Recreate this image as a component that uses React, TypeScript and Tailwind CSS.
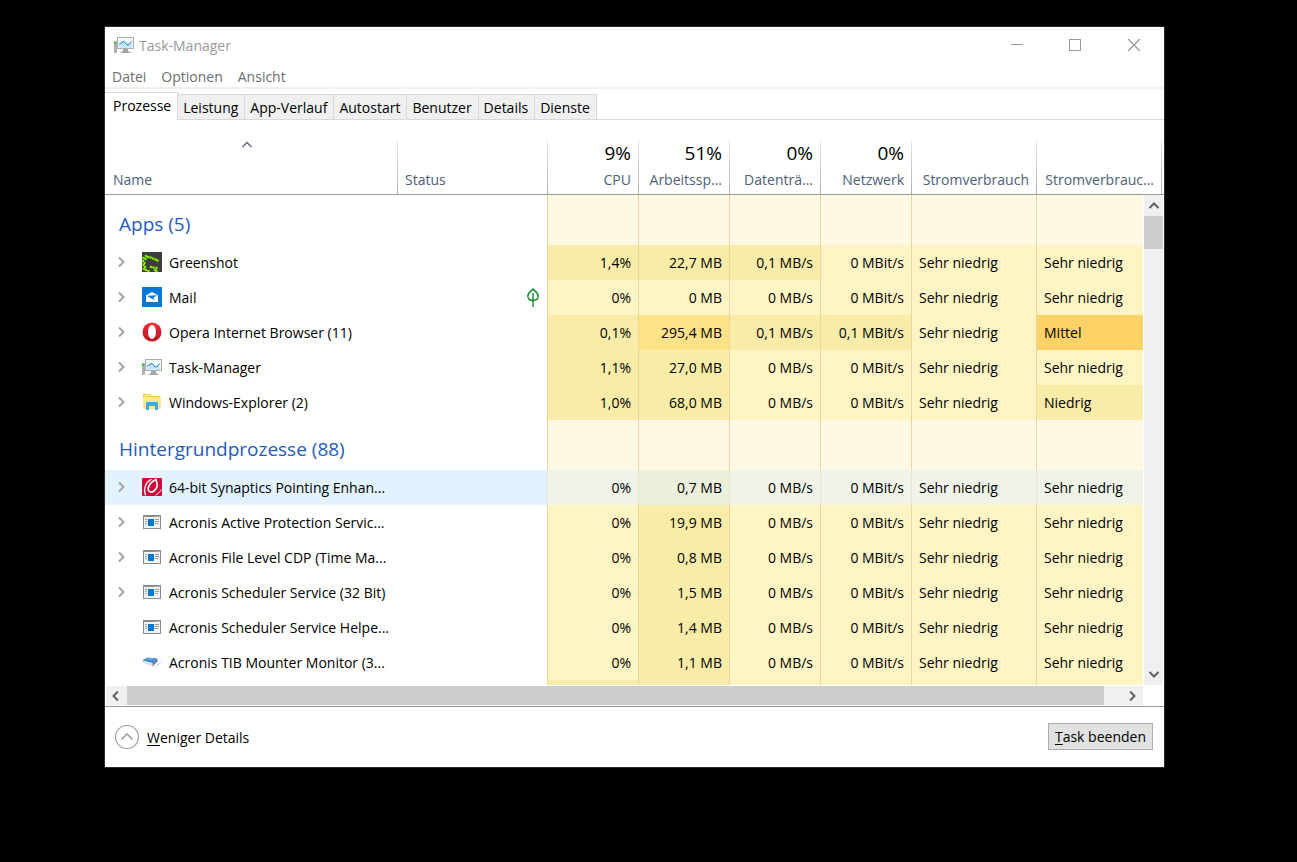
import { useState } from 'react'
import type { ReactNode } from 'react'
import clsx from 'clsx'

type Heat = 'base' | 'low' | 'mid' | 'high'

interface Process {
  name: string
  icon: ReactNode
  values: [string, Heat][]
  power: string
  trend: string
  trendHeat?: Heat
  expandable?: boolean
  leaf?: boolean
}

interface Group {
  title: string
  items: Process[]
}

const heatClass: Record<Heat, string> = {
  base: 'bg-[#fff4c4]',
  low: 'bg-[#f9eca8]',
  mid: 'bg-[#ffe287]',
  high: 'bg-[#ffd267]',
}

const hoverClass: Record<Heat, string> = {
  base: 'bg-[#eff3e8]',
  low: 'bg-[#ecefdb]',
  mid: 'bg-[#ecefdb]',
  high: 'bg-[#ecefdb]',
}

function GreenshotIcon() {
  const dots = [
    [4, 4], [6, 5], [8.5, 5.5], [11, 6.5], [13.5, 7.500], [15.5, 8.5],
    [1.5, 6], [3.5, 7], [1, 9], [2.5, 11], [1.5, 13], [3, 15], [2, 17], [4, 18],
    [9, 15], [11.5, 15.5], [14.5, 16], [13, 18], [6.5, 19], [14.5, 19],
  ]
  return (
    <svg width="20" height="20" viewBox="0 0 20 20">
      <rect width="20" height="20" fill="#3d3d3d" />
      {dots.map(([x, y]) => <circle key={`${x}-${y}`} cx={x} cy={y} r="1.3" fill="#85ee00" />)}
    </svg>
  )
}

function MailIcon() {
  return (
    <svg width="20" height="20" viewBox="0 0 20 20">
      <rect width="20" height="20" fill="#0078d7" />
      <path d="M4 8.2 10 5l6 3.2V15H4z" fill="#fff" />
      <path d="M5 8.8 15 8.2 11.2 11l2 2.3L9.6 11.4z" fill="#0078d7" />
    </svg>
  )
}

function OperaIcon() {
  return (
    <svg width="20" height="20" viewBox="0 0 20 20">
      <defs>
        <linearGradient id="opera" x1="0" y1="0" x2="0" y2="1">
          <stop offset="0" stopColor="#f4303c" />
          <stop offset="1" stopColor="#b8101e" />
        </linearGradient>
      </defs>
      <ellipse cx="10" cy="10" rx="9.5" ry="9.5" fill="url(#opera)" />
      <ellipse cx="10" cy="10" rx="4" ry="7" fill="#fff" />
    </svg>
  )
}

function MonitorIcon() {
  return (
    <svg width="20" height="18" viewBox="0 0 20 18" className="shrink-0">
      <rect x="0" y="5" width="3" height="12" fill="#b0b0b0" />
      <rect x="0" y="6" width="2" height="2" fill="#2fd02f" />
      <path d="M9 13h5v2l3 2H6l3-2z" fill="#a3a3a3" />
      <rect x="3.5" y="1.5" width="16" height="11" fill="#eef8fd" stroke="#aeaeae" />
      <path d="M5 8.5 9 5l4 4 3-3 2.5 2v4H5z" fill="#c9eafa" />
      <path d="M5 8.5 6.5 7 8 7 9.5 5 13 9 14.5 9 17.5 5.5" fill="none" stroke="#1781b8" />
    </svg>
  )
}

function FolderIcon() {
  return (
    <svg width="20" height="20" viewBox="0 0 20 20">
      <path d="M1 2h7l1 2h9v11H1z" fill="#fcc93e" />
      <rect x="3" y="3" width="4" height="1" fill="#fff" />
      <rect x="1" y="5" width="18" height="12" fill="#ffe694" />
      <path d="M4 18v-7l1-1h10l1 1v7h-3v-4H7v4z" fill="#37aee5" />
    </svg>
  )
}

function SynapticsIcon() {
  return (
    <svg width="20" height="18" viewBox="0 0 20 18">
      <rect width="20" height="18" rx="1" fill="#cf0a38" />
      <g fill="none" stroke="#fff" strokeLinecap="round">
        <path d="M14 1.5c1.5 4 1.5 9-2 11.5-3 2-6 1-5.800-2.500C6.500 6.500 10 3.500 14 1.500z" strokeWidth="1.6" />
        <path d="M9 1.5C3.5 4.5 1 11 3.5 17" strokeWidth="1.3" />
        <path d="M14 17c2-1.200 4-3 5-5" />
      </g>
    </svg>
  )
}

function AppWindowIcon() {
  return (
    <svg width="18" height="14" viewBox="0 0 18 14" shapeRendering="crispEdges" className="mx-auto">
      <rect width="18" height="14" fill="#888b8f" />
      <rect x="1" y="2" width="16" height="11" fill="#f4f4f4" />
      <path d="M12 1.5h1M14 1.5h1M16 1.5h1" stroke="#c4c6c8" />
      <rect x="5" y="4" width="6" height="7" fill="#0078d7" />
      <path d="M2 4.5h2M2 6.5h2M2 8.5h2M12 4.5h4M12 6.5h4M12 8.5h3" stroke="#999c9f" />
    </svg>
  )
}

function DriveIcon() {
  return (
    <svg width="20" height="12" viewBox="0 0 20 12">
      <path d="m13 10 6-4.500 1 .500-5.500 4.700z" fill="#d5d8da" />
      <path d="M0 4.2 10.5 7v3.5L1 7z" fill="#dfe5ea" />
      <path d="m10.500 7 5-4.500v3l-5 5z" fill="#5f7f9e" />
      <path d="M0 4.2 6 1.5l9.500 1L10.500 7z" fill="#3c8bcd" />
      <path d="M4 3.5 7 2l6 .8-3 1.500z" fill="#69aee2" />
    </svg>
  )
}

function LeafIcon() {
  return (
    <svg width="12" height="19" viewBox="0 0 12 19" fill="none" stroke="#138a28" strokeWidth="1.4">
      <path d="M6 1C4 3.3.8 5 .8 8c0 3 2 4.500 5.200 4.500s5.200-1.500 5.200-4.500c0-3-3.200-4.700-5.200-7zM6 5v14" />
    </svg>
  )
}

function Chevron({ d, color = '#606060', width = 2 }: { d: string; color?: string; width?: number }) {
  return (
    <svg width="12" height="12" viewBox="0 0 12 12" fill="none" stroke={color} strokeWidth={width}>
      <path d={d} />
    </svg>
  )
}

const UP = 'M1.5 8 6 3.5 10.5 8'
const DOWN = 'M1.5 4 6 8.5 10.5 4'
const LEFT = 'M8 1.5 3.5 6 8 10.5'
const RIGHT = 'M4 1.5 8.5 6 4 10.5'

const SN = 'Sehr niedrig'

function idle(name: string, icon: ReactNode, memory: string, expandable = true): Process {
  return {
    name, icon, expandable, power: SN, trend: SN,
    values: [['0%', 'base'], [memory, 'low'], ['0 MB/s', 'base'], ['0 MBit/s', 'base']],
  }
}

const groups: Group[] = [
  {
    title: 'Apps (5)',
    items: [
      { name: 'Greenshot', icon: <GreenshotIcon />, expandable: true, power: SN, trend: SN, values: [['1,4%', 'low'], ['22,7 MB', 'low'], ['0,1 MB/s', 'low'], ['0 MBit/s', 'base']] },
      { name: 'Mail', icon: <MailIcon />, expandable: true, leaf: true, power: SN, trend: SN, values: [['0%', 'base'], ['0 MB', 'base'], ['0 MB/s', 'base'], ['0 MBit/s', 'base']] },
      { name: 'Opera Internet Browser (11)', icon: <OperaIcon />, expandable: true, power: SN, trend: 'Mittel', trendHeat: 'high', values: [['0,1%', 'low'], ['295,4 MB', 'mid'], ['0,1 MB/s', 'low'], ['0,1 MBit/s', 'low']] },
      { name: 'Task-Manager', icon: <MonitorIcon />, expandable: true, power: SN, trend: SN, values: [['1,1%', 'low'], ['27,0 MB', 'low'], ['0 MB/s', 'base'], ['0 MBit/s', 'base']] },
      { name: 'Windows-Explorer (2)', icon: <FolderIcon />, expandable: true, power: SN, trend: 'Niedrig', trendHeat: 'low', values: [['1,0%', 'low'], ['68,0 MB', 'low'], ['0 MB/s', 'base'], ['0 MBit/s', 'base']] },
    ],
  },
  {
    title: 'Hintergrundprozesse (88)',
    items: [
      idle('64-bit Synaptics Pointing Enhan...', <SynapticsIcon />, '0,7 MB'),
      idle('Acronis Active Protection Servic...', <AppWindowIcon />, '19,9 MB'),
      idle('Acronis File Level CDP (Time Ma...', <AppWindowIcon />, '0,8 MB'),
      idle('Acronis Scheduler Service (32 Bit)', <AppWindowIcon />, '1,5 MB'),
      idle('Acronis Scheduler Service Helpe...', <AppWindowIcon />, '1,4 MB', false),
      idle('Acronis TIB Mounter Monitor (3...', <DriveIcon />, '1,1 MB', false),
    ],
  },
]

const columns = [
  { label: 'Name', total: '', left: true },
  { label: 'Status', total: '', left: true },
  { label: 'CPU', total: '9%' },
  { label: 'Arbeitssp...', total: '51%' },
  { label: 'Datenträ...', total: '0%' },
  { label: 'Netzwerk', total: '0%' },
  { label: 'Stromverbrauch', total: '' },
  { label: 'Stromverbrauc...', total: '' },
]

const tabs = ['Leistung', 'App-Verlauf', 'Autostart', 'Benutzer', 'Details', 'Dienste']

function TitleBar() {
  return (
    <header className="flex h-9 items-center pl-[9px] text-[#999]">
      <MonitorIcon />
      <h1 className="flex-1 pt-[2px] pl-[5px]">Task-Manager</h1>
      <button aria-label="Minimieren" className="flex w-[58px] justify-center">
        <svg width="12" height="12" shapeRendering="crispEdges"><path d="M0 5.5h12" stroke="#999" /></svg>
      </button>
      <button aria-label="Maximieren" className="flex w-[58px] justify-center">
        <svg width="12" height="12" shapeRendering="crispEdges"><rect x=".5" y=".5" width="11" height="11" fill="none" stroke="#999" /></svg>
      </button>
      <button aria-label="Schließen" className="flex w-[60px] justify-center">
        <svg width="12" height="12"><path d="m0 0 12 12M12 0 0 12" stroke="#8a8a8a" strokeWidth="1.2" /></svg>
      </button>
    </header>
  )
}

function TabBar() {
  return (
    <div role="tablist" className="flex h-[31px] items-end border-b border-[#d9d9d9]">
      <button role="tab" aria-selected className="-mb-px h-7 border-t border-r border-[#d9d9d9] bg-white pr-[6px] pb-[2px] pl-2">
        Prozesse
      </button>
      {tabs.map(tab => (
        <button key={tab} role="tab" aria-selected={false} className="h-[25px] border-t border-r border-[#d9d9d9] bg-[#f0f0f0] pt-px pr-[6px] pl-[5px]">
          {tab}
        </button>
      ))}
    </div>
  )
}

function HeaderRow() {
  return (
    <tr>
      {columns.map((col, i) => (
        <th key={i} scope="col" className={clsx('relative border-b border-[#999] pt-5 font-normal', i === 7 && 'pr-[2px]')}>
          <div className={clsx(
            'flex h-[54px] flex-col justify-end bg-linear-to-b from-[#e8e8e8] to-[#b0b0b0] bg-[length:1px_100%] bg-right bg-no-repeat pr-2 pb-1',
            col.left ? 'items-start' : 'items-end',
            i === 0 ? 'pl-2' : 'pl-[7px]'
          )}>
            {col.total && <span className="text-[19px] leading-6">{col.total}</span>}
            <span className="pt-[5px] leading-5 text-[#4c607a]">{col.label}</span>
          </div>
          {i === 0 && (
            <span className="absolute top-[19px] left-[136px]">
              <Chevron d={UP} color="#5d6387" width={1.4} />
            </span>
          )}
        </th>
      ))}
    </tr>
  )
}

function GroupRow({ title }: { title: string }) {
  return (
    <tr className="h-[50px]">
      <th colSpan={2} scope="colgroup" className="border-r border-[#ecd6a0] pt-2 pl-[14px] text-left text-[19px] leading-6 font-normal text-[#1e5bbf]">
        {title}
      </th>
      {[0, 1, 2, 3, 4, 5].map(i => (
        <td key={i} className={clsx('bg-[#fff8e2]', i < 5 && 'border-r border-[#ecd6a0]')} />
      ))}
    </tr>
  )
}

function ProcessRow({ process, selected, onSelect }: { process: Process; selected: boolean; onSelect: () => void }) {
  const heat = selected ? hoverClass : heatClass
  const line = selected ? 'border-[#ece4d2]' : 'border-[#ecd6a0]'

  return (
    <tr onClick={onSelect} className="h-[35px]">
      <td className={clsx(selected && 'bg-[#e3f2ff]')}>
        <div className="flex items-center pl-[10px]">
          <span className="flex w-[27px] shrink-0 pb-[2px]">
            {process.expandable && (
              <button aria-label={`${process.name} erweitern`}>
                <Chevron d={RIGHT} color="#a3a3a3" />
              </button>
            )}
          </span>
          <span className="flex w-5 shrink-0 pb-[2px]">{process.icon}</span>
          <span className="pl-[7px] whitespace-nowrap">{process.name}</span>
        </div>
      </td>
      <td className={clsx('border-r', line, selected && 'bg-[#e3f2ff]')}>
        {process.leaf && <span className="flex justify-end pr-2"><LeafIcon /></span>}
      </td>
      {process.values.map(([value, level], i) => (
        <td key={i} className={clsx('border-r pr-[7px] text-right whitespace-nowrap', line, heat[level])}>{value}</td>
      ))}
      <td className={clsx('border-r pl-[7px] whitespace-nowrap', line, heat.base)}>{process.power}</td>
      <td className={clsx('pl-[7px] whitespace-nowrap', heat[process.trendHeat ?? 'base'])}>{process.trend}</td>
    </tr>
  )
}

function ProcessTable() {
  const [selected, setSelected] = useState('64-bit Synaptics Pointing Enhan...')

  return (
    <div className="relative">
      <table className="w-full table-fixed border-separate border-spacing-0">
        <colgroup>
          <col className="w-[293px]" />
          <col className="w-[150px]" />
          <col className="w-[91px]" />
          <col className="w-[91px]" />
          <col className="w-[91px]" />
          <col className="w-[91px]" />
          <col className="w-[125px]" />
          <col />
        </colgroup>
        <thead><HeaderRow /></thead>
        {groups.map(group => (
          <tbody key={group.title}>
            <GroupRow title={group.title} />
            {group.items.map(p => (
              <ProcessRow key={p.name} process={p} selected={p.name === selected} onSelect={() => setSelected(p.name)} />
            ))}
          </tbody>
        ))}
        <tbody>
          <tr className="h-[5px]">
            <td />
            <td className="border-r border-[#ecd6a0]" />
            {(['low', 'low', 'base', 'base', 'base'] as Heat[]).map((level, i) => (
              <td key={i} className={clsx('border-r border-[#ecd6a0]', heatClass[level])} />
            ))}
            <td className={heatClass.base} />
          </tr>
        </tbody>
      </table>

      <div className="absolute top-[75px] right-0 bottom-0 flex w-[21px] flex-col border-x border-white bg-[#f0f0f0]">
        <button aria-label="Nach oben" className="flex h-[21px] items-center justify-center"><Chevron d={UP} /></button>
        <div className="h-[33px] bg-[#cdcdcd]" />
        <button aria-label="Nach unten" className="mt-auto flex h-[21px] items-center justify-center pb-px"><Chevron d={DOWN} /></button>
      </div>
    </div>
  )
}

function HorizontalScrollbar() {
  return (
    <div className="mt-px mr-[21px] ml-px flex h-[19px] bg-[#f0f0f0]">
      <button aria-label="Nach links" className="flex w-[21px] items-center justify-center pr-[2px]"><Chevron d={LEFT} /></button>
      <div className="mr-[18px] flex-1 bg-[#cdcdcd]" />
      <button aria-label="Nach rechts" className="flex w-[21px] items-center justify-center pr-[2px]"><Chevron d={RIGHT} /></button>
    </div>
  )
}

function Footer() {
  return (
    <footer className="mt-px flex h-[61px] items-center justify-between border-t border-[#999] pr-[11px] pl-[10px]">
      <button className="flex items-center gap-[7px]">
        <svg width="25" height="25" viewBox="0 0 25 25" fill="none" stroke="#a0a0a0">
          <circle cx="12" cy="12" r="11.5" strokeWidth="1.2" />
          <path d="M6.5 14.5 12 9l5.500 5.500" strokeWidth="1.6" />
        </svg>
        <span className="pt-px"><span className="underline underline-offset-2">W</span>eniger Details</span>
      </button>
      <button className="mb-[2px] h-[27px] border border-[#adadad] bg-[#e1e1e1] px-[6px] pt-px">
        <span className="underline underline-offset-2">T</span>ask beenden
      </button>
    </footer>
  )
}

export default function App() {
  return (
    <div className="min-h-screen bg-black pt-[26px] pr-[132px] pl-[104px] font-['Open_Sans','Noto_Sans',sans-serif] text-sm text-black">
      <main className="border border-[#2b2b2b] bg-white">
        <TitleBar />
        <nav className="flex h-[26px] items-center gap-[15px] border-b-2 border-[#f0f0f0] pt-1 pl-[7px] text-[#6d6d6d]">
          <button>Datei</button>
          <button>Optionen</button>
          <button>Ansicht</button>
        </nav>
        <TabBar />
        <ProcessTable />
        <HorizontalScrollbar />
        <Footer />
      </main>
    </div>
  )
}
